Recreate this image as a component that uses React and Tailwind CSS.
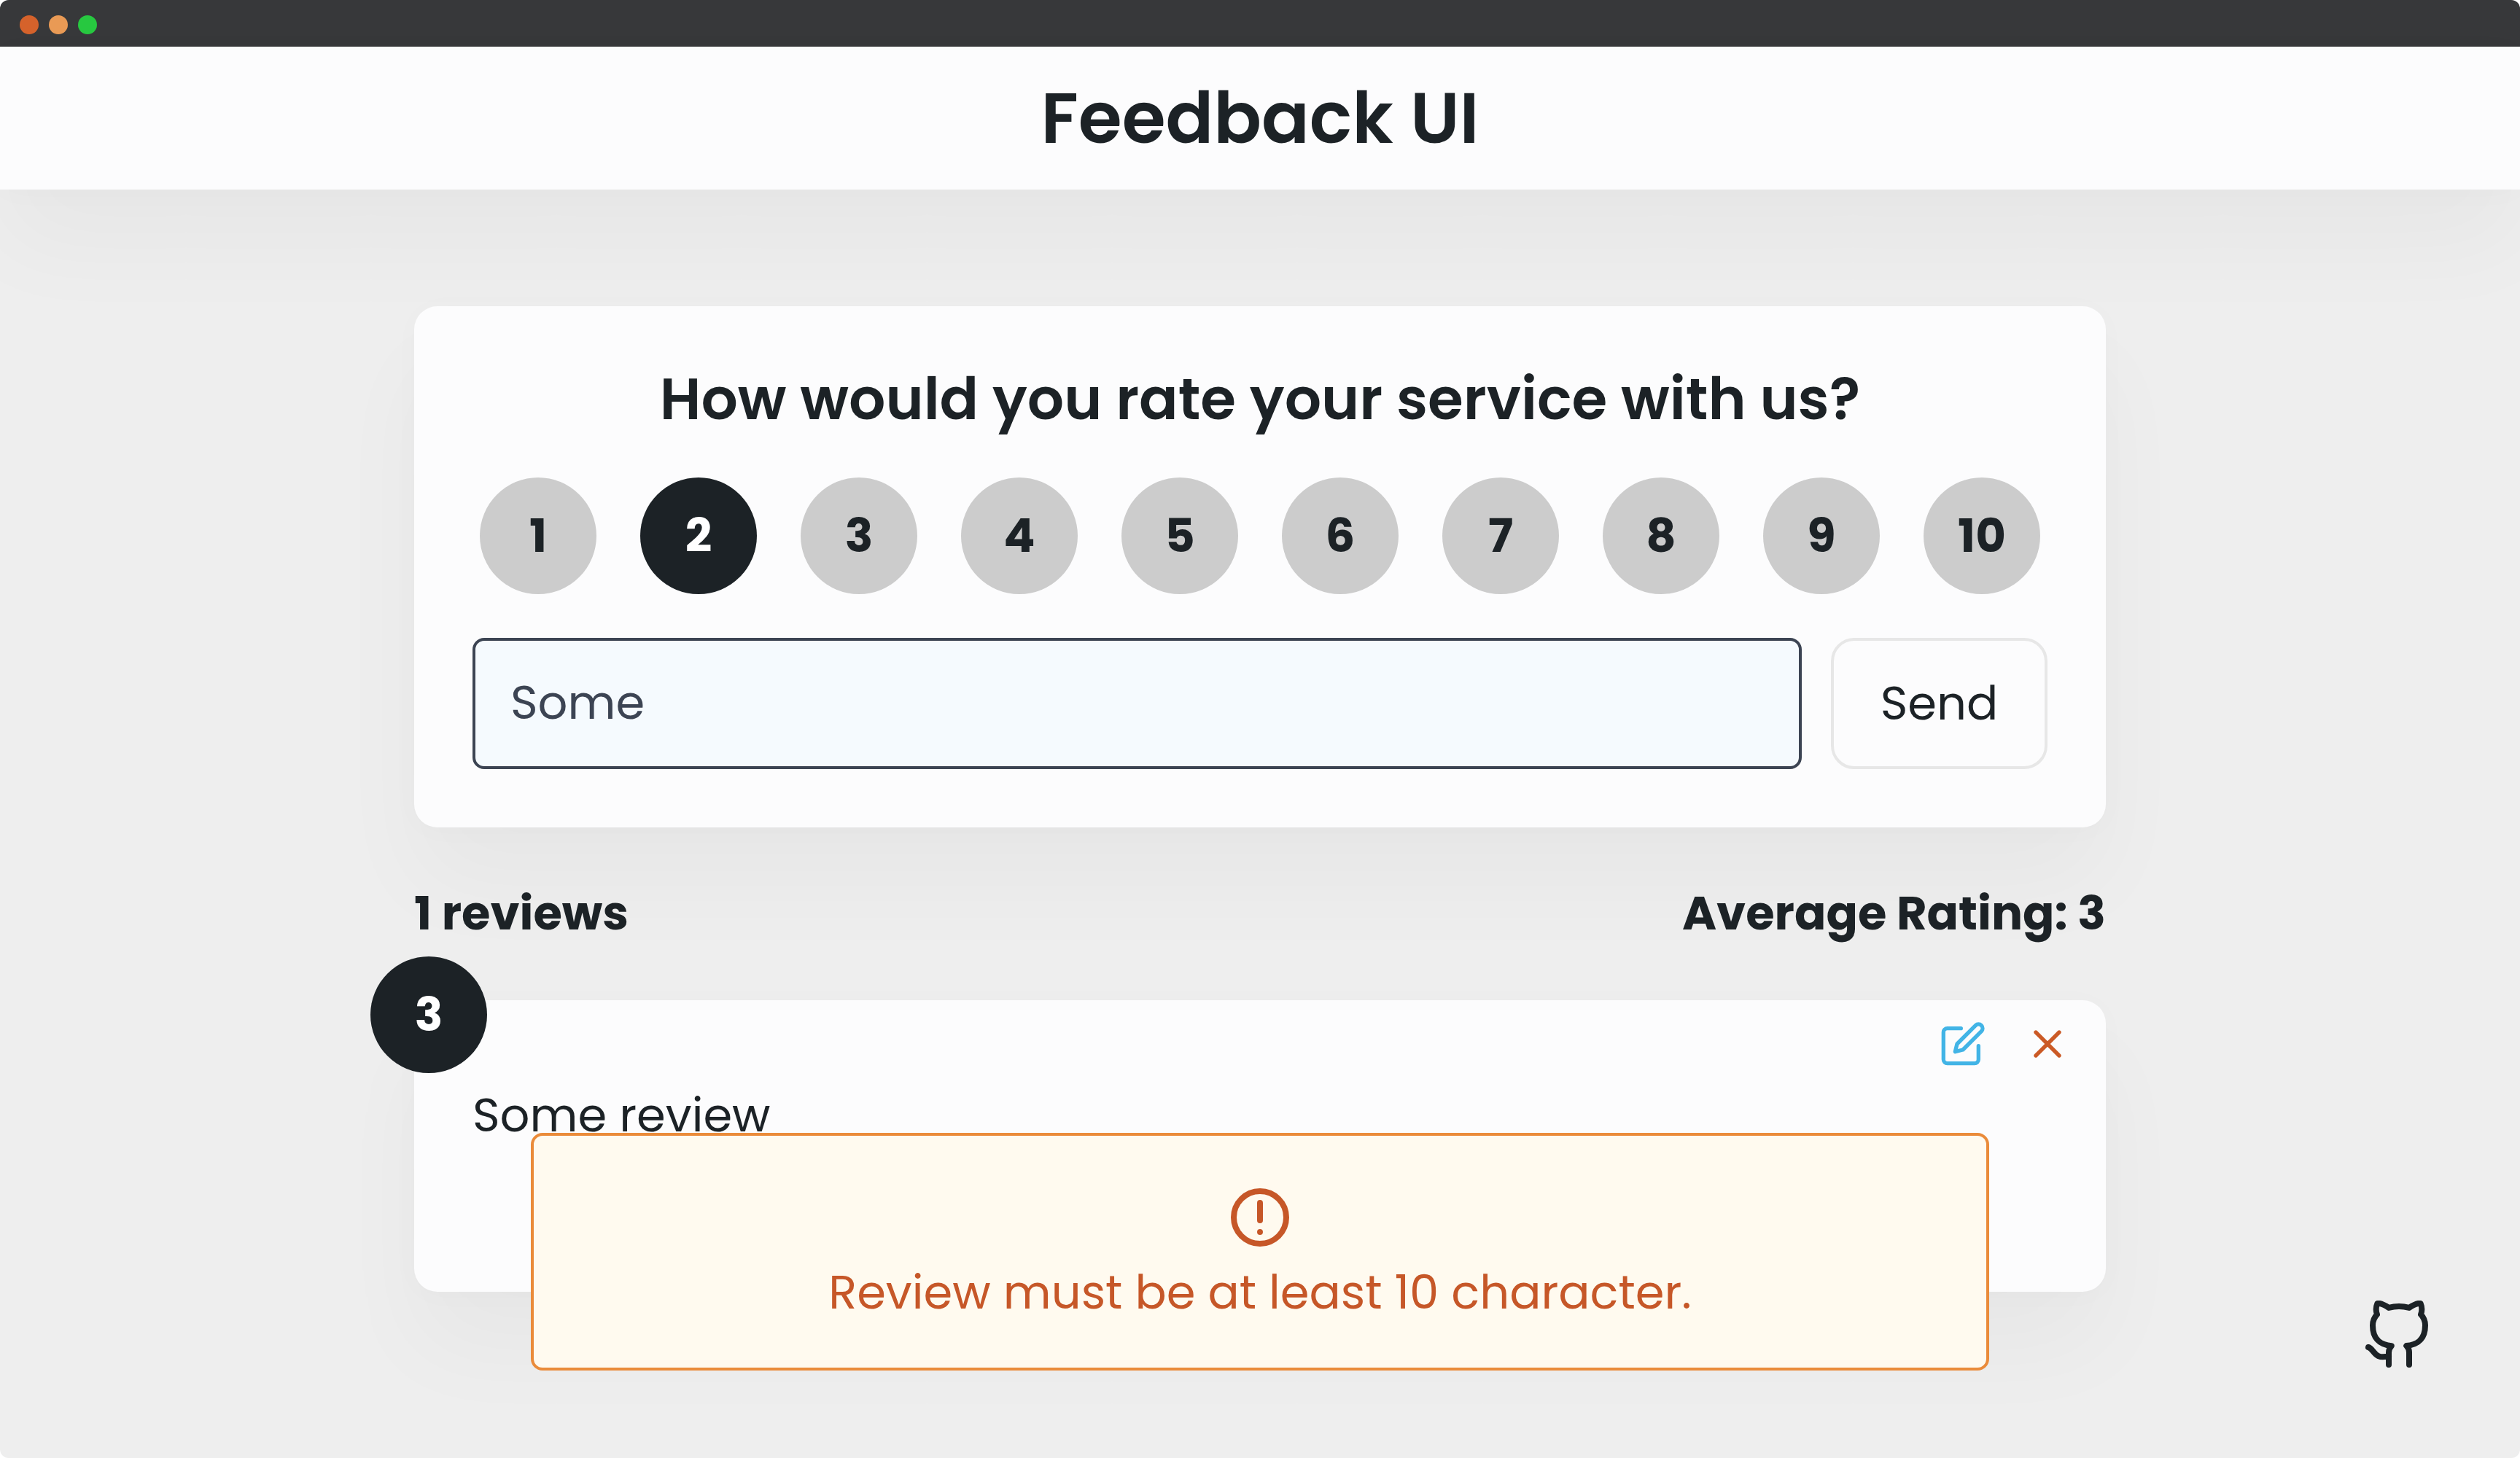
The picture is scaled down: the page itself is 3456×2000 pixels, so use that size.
import { useState } from "react";
import { FiEdit, FiGithub, FiX } from "react-icons/fi";

const surface =
  "bg-[#fcfcfd] shadow-[0_4px_40px_rgba(0,0,0,0.018),0_80px_130px_rgba(0,0,0,0.032)]";

function TitleBar() {
  return (
    <div className="flex h-16 items-center gap-[14px] bg-[#37383a] px-[27px] pt-1">
      <span className="size-[26px] rounded-full bg-[#d5622b]" />
      <span className="size-[26px] rounded-full bg-[#e99a55]" />
      <span className="size-[26px] rounded-full bg-[#27c840]" />
    </div>
  );
}

function RatingPicker({ value, onChange }) {
  return (
    <div role="group" aria-label="Rating" className="mt-[60px] flex flex-wrap justify-center gap-[60px]">
      {[1, 2, 3, 4, 5, 6, 7, 8, 9, 10].map((n) => (
        <button
          key={n}
          type="button"
          aria-pressed={n === value}
          onClick={() => onChange(n)}
          className={
            n === value
              ? "flex size-40 items-center justify-center rounded-full bg-[#1c2226] font-bold text-white"
              : "flex size-40 items-center justify-center rounded-full bg-[#ccc] font-bold"
          }
        >
          {n}
        </button>
      ))}
    </div>
  );
}

function AlertIcon() {
  return (
    <svg viewBox="0 0 24 24" className="size-24" fill="none" stroke="currentColor" strokeWidth="2" strokeLinecap="round" aria-hidden="true">
      <circle cx="12" cy="12" r="9" />
      <path d="M12 7v6M12 17v.01" />
    </svg>
  );
}

export default function App() {
  const [rating, setRating] = useState(2);
  const [text, setText] = useState("Some");

  return (
    <div className="min-h-screen overflow-hidden rounded-xl bg-[#eee] font-['Poppins','Inter',sans-serif] text-[64px] leading-[96px] text-[#1c2226]">
      <TitleBar />
      <header className={`flex h-[196px] items-center justify-center ${surface}`}>
        <h1 className="text-[97px] leading-[98px] font-semibold">Feedback UI</h1>
      </header>

      <main className="mx-auto mt-40 max-w-[2320px]">
        <form onSubmit={(e) => e.preventDefault()} className={`rounded-[32px] p-20 ${surface}`}>
          <h2 className="text-center text-[79px] leading-[95px] font-semibold">
            How would you rate your service with us?
          </h2>
          <RatingPicker value={rating} onChange={setRating} />
          <div className="mt-[60px] flex gap-10">
            <input
              type="text"
              aria-label="Review"
              value={text}
              onChange={(e) => setText(e.target.value)}
              className="h-[180px] min-w-0 flex-1 rounded-2xl border-4 border-[#3c4453] bg-[#f5fafe] px-12 pb-1 text-[#3c4453] outline-none"
            />
            <button type="submit" className="w-[297px] rounded-[32px] border-4 border-[#e7e7e7]">
              Send
            </button>
          </div>
        </form>

        <div className="mt-[70px] flex justify-between font-bold">
          <p>1 reviews</p>
          <p>Average Rating: 3</p>
        </div>

        <article className={`relative mt-[71px] min-h-[400px] rounded-[32px] pt-3 ${surface}`}>
          <span className="absolute -top-[60px] -left-[60px] flex size-40 items-center justify-center rounded-full bg-[#1c2226] font-bold text-white">
            3
          </span>
          <div className="flex justify-end gap-5 pr-8">
            <button type="button" aria-label="Edit review" className="p-4 text-[#42b4e6]">
              <FiEdit className="size-16" />
            </button>
            <button type="button" aria-label="Delete review" className="p-4 text-[#cb5a26]">
              <FiX className="size-16" />
            </button>
          </div>
          <p className="px-20 leading-[100px]">Some review</p>
        </article>
      </main>

      <div className="fixed inset-x-0 bottom-[120px] flex justify-center">
        <div
          role="alert"
          className="flex w-full max-w-[2000px] flex-col items-center rounded-2xl border-4 border-[#ea8b3a] bg-[#fffaef] pt-16 pb-12 leading-[110px] text-[#c65728]"
        >
          <AlertIcon />
          <p>Review must be at least 10 character.</p>
        </div>
      </div>

      <a href="#github" aria-label="GitHub" className="fixed right-[120px] bottom-[120px]">
        <FiGithub className="size-24" />
      </a>
    </div>
  );
}
